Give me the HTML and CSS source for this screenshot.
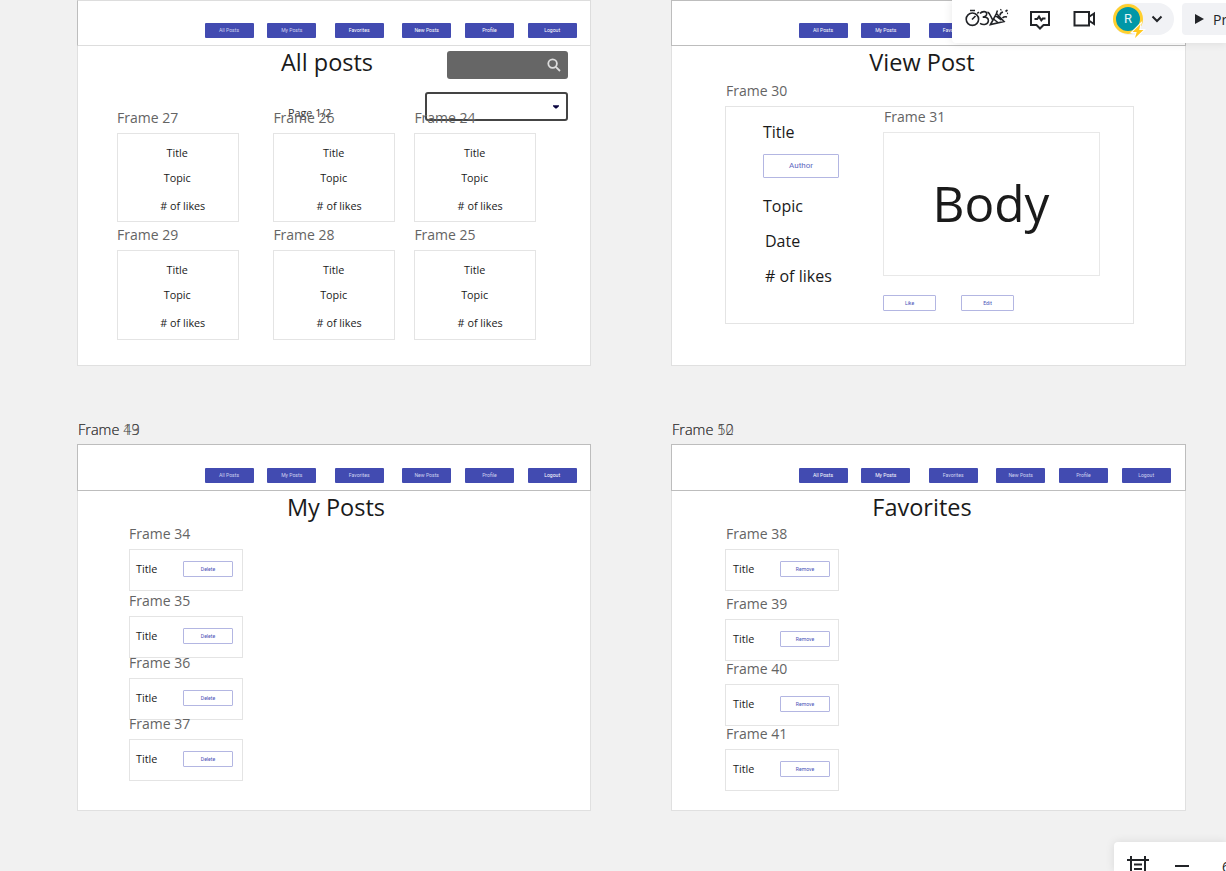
FILE: index.html
```html
<!DOCTYPE html>
<html lang="en">
<head>
<meta charset="utf-8">
<title>Blog wireframes</title>
<link rel="stylesheet" href="styles.css">
</head>
<body>
<main class="canvas">
  <section class="board board-all">
    <nav class="nav nav-faint"><span class="soft">All Posts</span><span class="soft">My Posts</span><span class="wide">Favorites</span><span class="wide">New Posts</span><span>Profile</span><span>Logout</span></nav>
    <h1 class="heading">All posts</h1>
    <div class="search"><svg viewBox="0 0 14 14" width="14" height="14"><circle cx="5.6" cy="5.6" r="4.3"/><path d="M8.8 8.8L13 13"/></svg></div>
    <div class="select"><svg viewBox="0 0 6 4" width="6" height="4"><path d="M0 .3h6v1L3.6 3.6H2.4L0 1.3z"/></svg></div>
    <span class="page-no">Page 1/2</span>
    <div class="cards">
      <article class="card"><span class="label">Frame 27</span><p>Title</p><p>Topic</p><p># of likes</p></article>
      <article class="card"><span class="label">Frame 26</span><p>Title</p><p>Topic</p><p># of likes</p></article>
      <article class="card"><span class="label">Frame 24</span><p>Title</p><p>Topic</p><p># of likes</p></article>
      <article class="card"><span class="label">Frame 29</span><p>Title</p><p>Topic</p><p># of likes</p></article>
      <article class="card"><span class="label">Frame 28</span><p>Title</p><p>Topic</p><p># of likes</p></article>
      <article class="card"><span class="label">Frame 25</span><p>Title</p><p>Topic</p><p># of likes</p></article>
    </div>
  </section>

  <section class="board board-view">
    <nav class="nav"><span>All Posts</span><span>My Posts</span><span class="wide">Favorites</span><span class="wide">New Posts</span><span>Profile</span><span>Logout</span></nav>
    <h1 class="heading">View Post</h1>
    <div class="post">
      <span class="label">Frame 30</span>
      <div class="meta">
        <p>Title</p>
        <span class="outline author">Author</span>
        <p>Topic</p>
        <p class="inset">Date</p>
        <p class="inset"># of likes</p>
      </div>
      <div class="content">
        <div class="body-box"><span class="label">Frame 31</span>Body</div>
        <div class="actions"><span class="outline">Like</span><span class="outline">Edit</span></div>
      </div>
    </div>
  </section>

  <section class="board board-lower board-mine">
    <span class="label">Frame 49</span><span class="label">Frame 13</span>
    <nav class="nav"><span class="soft">All Posts</span><span class="soft">My Posts</span><span class="wide soft">Favorites</span><span class="wide soft">New Posts</span><span class="soft">Profile</span><span>Logout</span></nav>
    <h1 class="heading">My Posts</h1>
    <div class="list">
      <div class="row"><span class="label">Frame 34</span>Title<span class="outline">Delete</span></div>
      <div class="row"><span class="label">Frame 35</span>Title<span class="outline">Delete</span></div>
      <div class="row"><span class="label">Frame 36</span>Title<span class="outline">Delete</span></div>
      <div class="row"><span class="label">Frame 37</span>Title<span class="outline">Delete</span></div>
    </div>
  </section>

  <section class="board board-lower board-fav">
    <span class="label">Frame 12</span><span class="label">Frame 50</span>
    <nav class="nav"><span>All Posts</span><span>My Posts</span><span class="wide soft">Favorites</span><span class="wide soft">New Posts</span><span class="soft">Profile</span><span class="soft">Logout</span></nav>
    <h1 class="heading">Favorites</h1>
    <div class="list">
      <div class="row"><span class="label">Frame 38</span>Title<span class="outline">Remove</span></div>
      <div class="row"><span class="label">Frame 39</span>Title<span class="outline">Remove</span></div>
      <div class="row"><span class="label">Frame 40</span>Title<span class="outline">Remove</span></div>
      <div class="row"><span class="label">Frame 41</span>Title<span class="outline">Remove</span></div>
    </div>
  </section>
</main>

<header class="toolbar">
  <svg class="icon icon-fun" viewBox="0 0 44 22" width="44" height="22">
    <circle cx="7.4" cy="13.2" r="6.2"/><path d="M5 4.500h5M7 13.500l3.500-3.500M12.300 7.500l1.500-1.500"/>
    <path d="M15 7.500c2-2.500 6.500-2.600 6.700.1.200 2.200-2 3.400-4 3.500 3.300-.2 5.900.7 5.700 3.600-.2 4-5 4.600-8.400 2.700"/>
    <path d="M22.500 6c2.500 1 3 4.500 5 7.500M25.500 18.500L31.500 7.500l7.500 8zM28.500 13l5 4M30.500 9.500l6 4.500"/>
    <path d="M31.500 7l1-2.500M35 9.500c0-2 1-3 3-3.500M37.500 12c1.500-1.500 2.500-1.500 4.500-1M40.500 5.500l2-1.500M35.500 4.200l.8-.8M42 7.500l1-.3"/>
  </svg>
  <svg class="icon icon-activity" viewBox="0 0 20 20" width="20" height="20"><path d="M1 2h18v13h-5.500l-3.500 3.500L6.500 15H1zM4.500 9h2.700L9 6.600l2.300 3.700 1.500-1.800h2.700"/></svg>
  <svg class="icon icon-video" viewBox="0 0 23 18" width="23" height="18"><path d="M1.500 2h14.500v13.500H1.500zM16.500 6.500l4.500-3v10.500l-4.500-3"/></svg>
  <div class="user">
    <div class="avatar">R<svg viewBox="0 0 14 16" width="14" height="16"><path d="M9.500 1L1.500 9h4.200L4 15 12.500 7H8.200z"/></svg></div>
    <svg class="icon icon-caret" viewBox="0 0 12 8" width="12" height="8"><path d="M1.500 1.500L6 6l4.500-4.500"/></svg>
  </div>
  <div class="present"><svg viewBox="0 0 9 10" width="9" height="10"><path d="M0 0l9 5-9 5z"/></svg>Present</div>
</header>

<footer class="zoom-bar">
  <svg class="icon" viewBox="0 0 22 22" width="22" height="22"><path d="M0 4h22M4 0v22M18 0v22M7 8.500h8M7 13h8M0 18h22"/></svg>
  <span class="minus"></span>
  <span class="percent">63%</span>
</footer>
</body>
</html>
```
FILE: styles.css
```css
* { box-sizing: border-box; }
body { margin: 0; background: #f1f1f1; color: #1a1a1a; font-family: "Open Sans", "Noto Sans", sans-serif; overflow: hidden; }
p, h1 { margin: 0; font-weight: 400; }

.canvas { position: relative; width: 1226px; height: 871px; overflow: hidden; }

/* Wireframe boards placed on the free canvas */
.board { position: absolute; width: 514px; height: 366px; background: #fff; border: 1px solid #e0e0e0; }
.board-all { left: 77px; top: 0; }
.board-view { left: 671px; top: 0; width: 515px; }
.board-lower { height: 367px; top: 444px; }
.board-mine { left: 77px; }
.board-fav { left: 671px; width: 515px; }

.label { position: absolute; left: -1px; top: -26px; font-size: 14px; line-height: 20px; color: #646464; white-space: nowrap; }
.board > .label { top: -25px; left: 0; font-size: 14.500px; font-weight: 300; color: #444; }

.nav { display: flex; gap: 14px; height: 46px; margin: -1px; padding: 22px 0 0 126.500px; border: 1px solid #bdbdbd; }
.nav-faint { border-color: #ddd; border-left-color: #bdbdbd; }
.board-lower .nav { height: 47px; padding-top: 23px; }
.nav span { width: 49px; height: 15px; background: #424bb1; border-radius: 1px; color: #fff; font: 5.1px/15px Roboto, sans-serif; text-align: center; }
.nav span + span { margin-left: -.300px; }
.nav .wide.wide { margin-left: 4.500px; }
.nav .soft { color: #d0d3f0; }

.heading { height: 34px; font-size: 23.500px; line-height: 34px; text-align: center; }
.board-all .heading { padding-right: 14px; }
.board-view .heading { padding-right: 13px; }
.board-mine .heading { padding-left: 4px; }
.board-fav .heading { padding-right: 13px; }

.search, .select { position: absolute; display: flex; align-items: center; justify-content: flex-end; right: 22px; height: 28px; border-radius: 3px; }
.search { top: 50px; width: 121px; padding-right: 7px; background: #666; }
.search svg { fill: none; stroke: #ddd; stroke-width: 1.800; }
.select { top: 91px; width: 143px; height: 29px; padding-right: 7px; border: 2px solid #444; background: #fff; }
.select svg { fill: #0a0540; }
.page-no { position: absolute; left: 210px; top: 104px; font-size: 10.800px; line-height: 16px; color: #333; }

.cards { display: grid; grid-template-columns: 156.400px 141px 122px; grid-auto-rows: 89.400px; row-gap: 28px; padding: 54px 0 0 39px; }
.card { position: relative; width: 121.500px; border: 1px solid #e4e4e4; padding-top: 9px; font-size: 10.800px; line-height: 20px; text-align: center; }
.card p { height: 25px; padding-right: 1px; }
.card p:last-child { padding: 3px 0 0 10px; height: 28px; }

.post { position: relative; display: flex; width: 409px; height: 218px; margin: 27px 0 0 53px; border: 1px solid #e4e4e4; }
.meta { width: 157px; padding: 13px 0 0 37px; font-size: 16px; line-height: 24px; }
.meta p { height: 35px; }
.meta .inset { padding-left: 2px; }
.outline { display: block; width: 53px; height: 16px; border: 1px solid #b3b6e2; border-radius: 1px; color: #4850b5; font: 5.100px/14px Roboto, sans-serif; text-align: center; }
.meta p:first-child { height: 34px; }
.meta .author { width: 76px; height: 24px; margin-bottom: 16px; font-size: 8px; line-height: 22px; color: #6067c0; }
.body-box { position: relative; width: 217px; height: 144px; margin-top: 25px; border: 1px solid #e8e8e8; font-size: 49.500px; line-height: 140px; text-align: center; padding-right: 1px; }
.actions { display: flex; gap: 25px; margin-top: 19px; }

.list { padding: 25px 0 0 51px; }
.board-fav .list { padding-left: 53px; }
.row { position: relative; display: flex; justify-content: space-between; width: 114px; height: 42px; margin-bottom: 25px; padding: 11px 9px 0 6px; border: 1px solid #e4e4e4; font-size: 10.800px; line-height: 15px; }
.board-fav .row { padding: 11px 8px 0 7px; }
.row .outline { width: 50px; height: 16px; line-height: 14px; }
.board-mine .row:nth-child(n+2) { margin-bottom: 19.500px; }
.board-fav .row { margin-bottom: 23px; }
.board-fav .row:nth-child(1) { margin-bottom: 28px; }
.board-fav .row .label, .post .label { left: 0; }

/* Floating application chrome */
.toolbar, .zoom-bar { position: absolute; right: 0; display: flex; background: #fff; overflow: hidden; box-shadow: 0 0 10px rgba(0,0,0,.1); }
.toolbar { top: 0; width: 274px; height: 43px; padding-left: 13px; border-bottom-left-radius: 4px; }
.icon { flex: none; fill: none; stroke: #222428; stroke-width: 2; }
.icon-fun { margin-top: 6px; stroke-width: 1.600; }
.icon-activity { margin: 10px 0 0 21px; }
.icon-video { margin: 10px 0 0 23px; }
.user { position: relative; flex: none; display: flex; width: 61px; height: 32px; margin: 3px 0 0 17px; border-radius: 16px; background: #f1f2f5; }
.avatar { position: relative; width: 30px; height: 30px; margin: 1px 0 0 0; border: 3px solid #ffd02f; border-radius: 50%; background: #0097a7; color: #e6f5f6; font: 13px/24px Roboto, sans-serif; text-align: center; }
.avatar svg { position: absolute; left: 15px; top: 16px; overflow: visible; fill: #ffc81e; stroke: #fff; stroke-width: 2; paint-order: stroke; }
.icon-caret { margin: 12px 0 0 8px; }
.present { display: flex; align-items: center; flex: none; gap: 9px; width: 100px; height: 32px; margin: 3px 0 0 8px; padding-left: 13px; border-radius: 4px; background: #f1f2f5; color: #222428; font-size: 14px; }
.present svg { flex: none; fill: #222428; }
.zoom-bar { top: 842px; width: 112px; height: 29px; padding-left: 13px; border-top-left-radius: 4px; }
.zoom-bar .icon { margin-top: 14px; }
.minus { flex: none; width: 14px; height: 2px; margin: 23px 0 0 26px; background: #222428; }
.percent { margin: 15px 0 0 33px; font-size: 14px; line-height: 20px; color: #222428; }
```
